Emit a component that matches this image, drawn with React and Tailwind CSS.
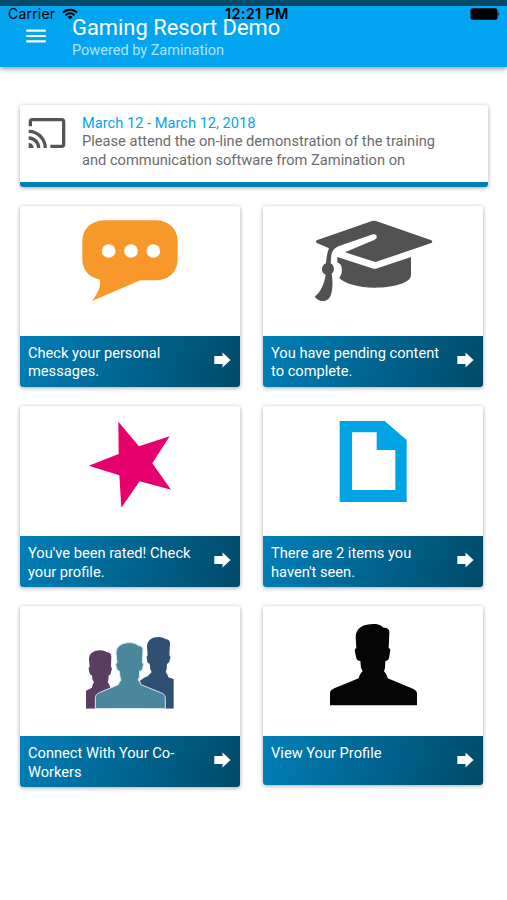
import React from 'react';
import { MdCast, MdMenu } from 'react-icons/md';

const PERSON =
  'M356 72 C372 72 380 77 386 83 C399 83 404 89 403 99 L401 145 C406 145 407 149 405 157 L402 174 C400 181 396 183 391 183 L390 203 L387 214 C393 219 396 227 398 235 L470 265 C480 269 486 273 486 280 L486 316 L225 316 L225 280 C225 272 230 269 238 265 L311 235 C313 227 316 219 323 214 L318 203 L316 183 C310 183 306 181 304 174 L300 157 C299 149 300 145 304 145 L302 112 C302 82 327 72 356 72 Z';

const MessageIcon = () => (
  <svg viewBox="30 18 660 390" className="block w-full h-[130px]">
    <path
      fill="#f8982a"
      d="M281 61 H440 C478 63 503 88 503 124 V178 C503 214 478 240 440 241 H391 L246 303 C262 281 273 262 270 239 C238 233 217 211 217 178 V124 C217 88 242 63 281 61 Z"
    />
    <circle cx="296" cy="153" r="20.5" fill="#fff" />
    <circle cx="363" cy="153" r="20.5" fill="#fff" />
    <circle cx="430" cy="153" r="20.5" fill="#fff" />
  </svg>
);

const GraduationIcon = () => (
  <svg viewBox="24 18 660 390" className="block w-full h-[130px]">
    <g fill="#525252">
      <path d="M351 63 Q357 61 363 63 L527 120 Q537 125 527 130 L368 184 Q361 187 354 184 L270 157 L359 119 C369 114 367 101 354 103 L250 139 C239 144 232 152 229 164 L227 190 C239 197 240 214 230 221 C234 244 233 264 229 280 C225 298 213 305 200 303 C191 301 184 296 179 290 C198 275 208 250 212 224 C197 218 197 197 213 190 C214 172 217 157 222 145 L187 130 Q178 125 187 120 Z" />
      <path d="M247 171 L351 205 Q359 208 367 205 L468 171 L468 225 C468 249 415 263 359 263 C310 263 268 250 253 234 L259 222 C262 213 261 201 256 193 L247 187 Z" />
    </g>
  </svg>
);

const StarIcon = () => (
  <svg viewBox="30 18 660 390" className="block w-full h-[130px]">
    <path fill="#e5006b" d="M325 65 L387 139 L479 109 L427 190 L483 269 L389 244 L334 323 L328 226 L236 197 L326 162 Z" />
  </svg>
);

const DocumentIcon = () => (
  <svg viewBox="24 18 660 390" className="block w-full h-[130px]">
    <path fill="#00a4e4" fillRule="evenodd" d="M254 63 H389 L455 120 V306 H254 Z M291 97 V270 H421 V150 H365 V97 Z" />
  </svg>
);

const CoWorkersIcon = () => (
  <svg viewBox="30 18 660 390" className="block w-full h-[130px]">
    <path
      fill="#5b3d62"
      d="M270 151 C281 151 287 154 290 157 C300 157 304 163 304 170 L303 201 C307 203 306 209 303 216 C302 223 300 226 296 226 L295 241 L293 247 C297 251 298 256 301 261 L301 326 H228 V272 L246 263 C247 256 249 251 252 247 L247 238 L246 226 C241 225 238 220 237 212 C235 206 236 201 239 201 L237 178 C237 159 252 151 270 151 Z"
    />
    <path
      fill="#2f4f73"
      d="M446 111 C457 111 463 114 468 118 C477 118 480 124 480 131 L478 166 C483 168 481 175 479 181 C478 188 475 191 471 191 L470 208 L467 216 C471 221 474 226 475 232 L491 237 V326 H400 V234 L412 230 L425 216 L421 208 L419 191 C414 190 411 185 411 179 C409 171 410 167 413 166 L411 140 C411 120 427 111 446 111 Z"
    />
    <path fill="#2f4f73" d="M420 225 L391 241 L391 275 H440 Z" />
    <path
      fill="#4a879c"
      stroke="#d9e7f2"
      strokeWidth="3"
      d="M359 128 C373 128 380 132 385 137 C395 137 400 143 399 151 L397 188 C402 190 400 197 398 204 C397 210 394 213 389 213 L388 230 L385 241 C389 245 391 249 393 254 L452 278 C463 282 466 286 466 295 L466 326 L256 326 L256 295 C256 286 260 282 268 278 L325 254 C327 249 329 245 333 241 L330 230 L328 213 C323 212 320 207 319 201 C316 194 317 189 321 188 L318 160 C318 137 337 128 359 128 Z"
    />
    <path fill="#fff" d="M226 326 H494 V332 H226 Z" />
  </svg>
);

const ProfileIcon = () => (
  <svg viewBox="24 18 660 390" className="block w-full h-[130px]">
    <path fill="#050505" d={PERSON} />
  </svg>
);

const cards = [
  { text: 'Check your personal messages.', Icon: MessageIcon },
  { text: 'You have pending content to complete.', Icon: GraduationIcon },
  { text: "You've been rated! Check your profile.", Icon: StarIcon },
  { text: "There are 2 items you haven't seen.", Icon: DocumentIcon },
  { text: 'Connect With Your Co-Workers', Icon: CoWorkersIcon },
  { text: 'View Your Profile', Icon: ProfileIcon, short: true },
];

const ArrowIcon = () => (
  <svg viewBox="0 0 17 16" className="mt-[16px] w-[17px] h-[16px] shrink-0">
    <path fill="#fff" d="M0.3 4 H8.5 V0.6 L16.6 8 L8.5 15.4 V12 H0.3 Z" />
  </svg>
);

const Card = ({ text, Icon, short }) => (
  <div className="self-start overflow-hidden rounded-[3px] bg-white shadow-[0_1px_4px_rgba(0,0,0,0.35)]">
    <Icon />
    <div
      className={`flex items-start justify-between pl-2 pr-[9px] bg-[linear-gradient(110deg,#0080b8_0%,#004a68_100%)] ${
        short ? 'h-[49px]' : 'h-[51px]'
      }`}
    >
      <p className="w-[172px] pt-[8px] text-[14.65px] leading-[18.4px] text-white">{text}</p>
      <ArrowIcon />
    </div>
  </div>
);

const StatusBar = () => (
  <div className="absolute inset-x-0 top-[6px] flex h-4 items-center justify-between pl-2 pr-[7px] font-[Inter,sans-serif] text-black">
    <div className="flex items-center gap-[7px]">
      <span className="text-[14px] leading-4 tracking-[0.2px]">Carrier</span>
      <svg viewBox="0 0 16 12" className="h-[12px] w-[16px]">
        <g fill="none" stroke="#000" strokeWidth="2">
          <path d="M1 4.5 A10 10 0 0 1 15 4.5" />
          <path d="M3.6 7.2 A6.2 6.2 0 0 1 12.4 7.2" />
        </g>
        <path d="M8 11.6 L5.5 9 A3.5 3.5 0 0 1 10.5 9 Z" />
      </svg>
    </div>
    <span className="absolute left-[225px] text-[14.5px] font-semibold leading-4 tracking-[0.3px] whitespace-nowrap">
      12:21 PM
    </span>
    <svg viewBox="0 0 30 12" className="h-[12px] w-[30px]">
      <rect x="0.5" y="0.3" width="27" height="11.4" rx="2" />
      <path d="M28.2 4 Q30 6 28.2 8 Z" />
    </svg>
  </div>
);

const App = () => (
  <div className="relative min-h-[900px] w-[507px] bg-white font-[Roboto,sans-serif]">
    <header className="flex h-[67px] border-t-[6px] border-[#004b69] bg-[#03a5f0] shadow-[0_2px_5px_rgba(0,0,0,0.4)]">
      <MdMenu className="ml-[23px] mt-[17px] h-[26px] w-[26px] text-white" />
      <div className="ml-[23px] pt-[8px]">
        <h1 className="text-[21.9px] leading-[27px] text-white">Gaming Resort Demo</h1>
        <p className="text-[14.5px] leading-[19px] text-[#b0e3fb]">Powered by Zamination</p>
      </div>
    </header>
    <StatusBar />

    <main className="pt-[38px]">
      <section className="ml-5 flex h-[82px] w-[468px] overflow-hidden rounded-[3px] border-b-[5px] border-[#0080b3] bg-white shadow-[0_1px_4px_rgba(0,0,0,0.35)]">
        <MdCast className="ml-[7px] mt-[8px] h-[40px] w-[40px] text-[#555]" />
        <div className="ml-[15px] pt-[9px] text-[14.65px] leading-[18.4px]">
          <p className="text-[#03a5f0]">March 12 - March 12, 2018</p>
          <p className="w-[370px] text-[#6b6b6b]">
            Please attend the on-line demonstration of the training and communication software from Zamination on
          </p>
        </div>
      </section>

      <div className="ml-5 mt-[19px] grid grid-cols-[220px_220px] gap-x-[23px] gap-y-[19.2px]">
        {cards.map((card) => (
          <Card key={card.text} {...card} />
        ))}
      </div>
    </main>
  </div>
);

export default App;
